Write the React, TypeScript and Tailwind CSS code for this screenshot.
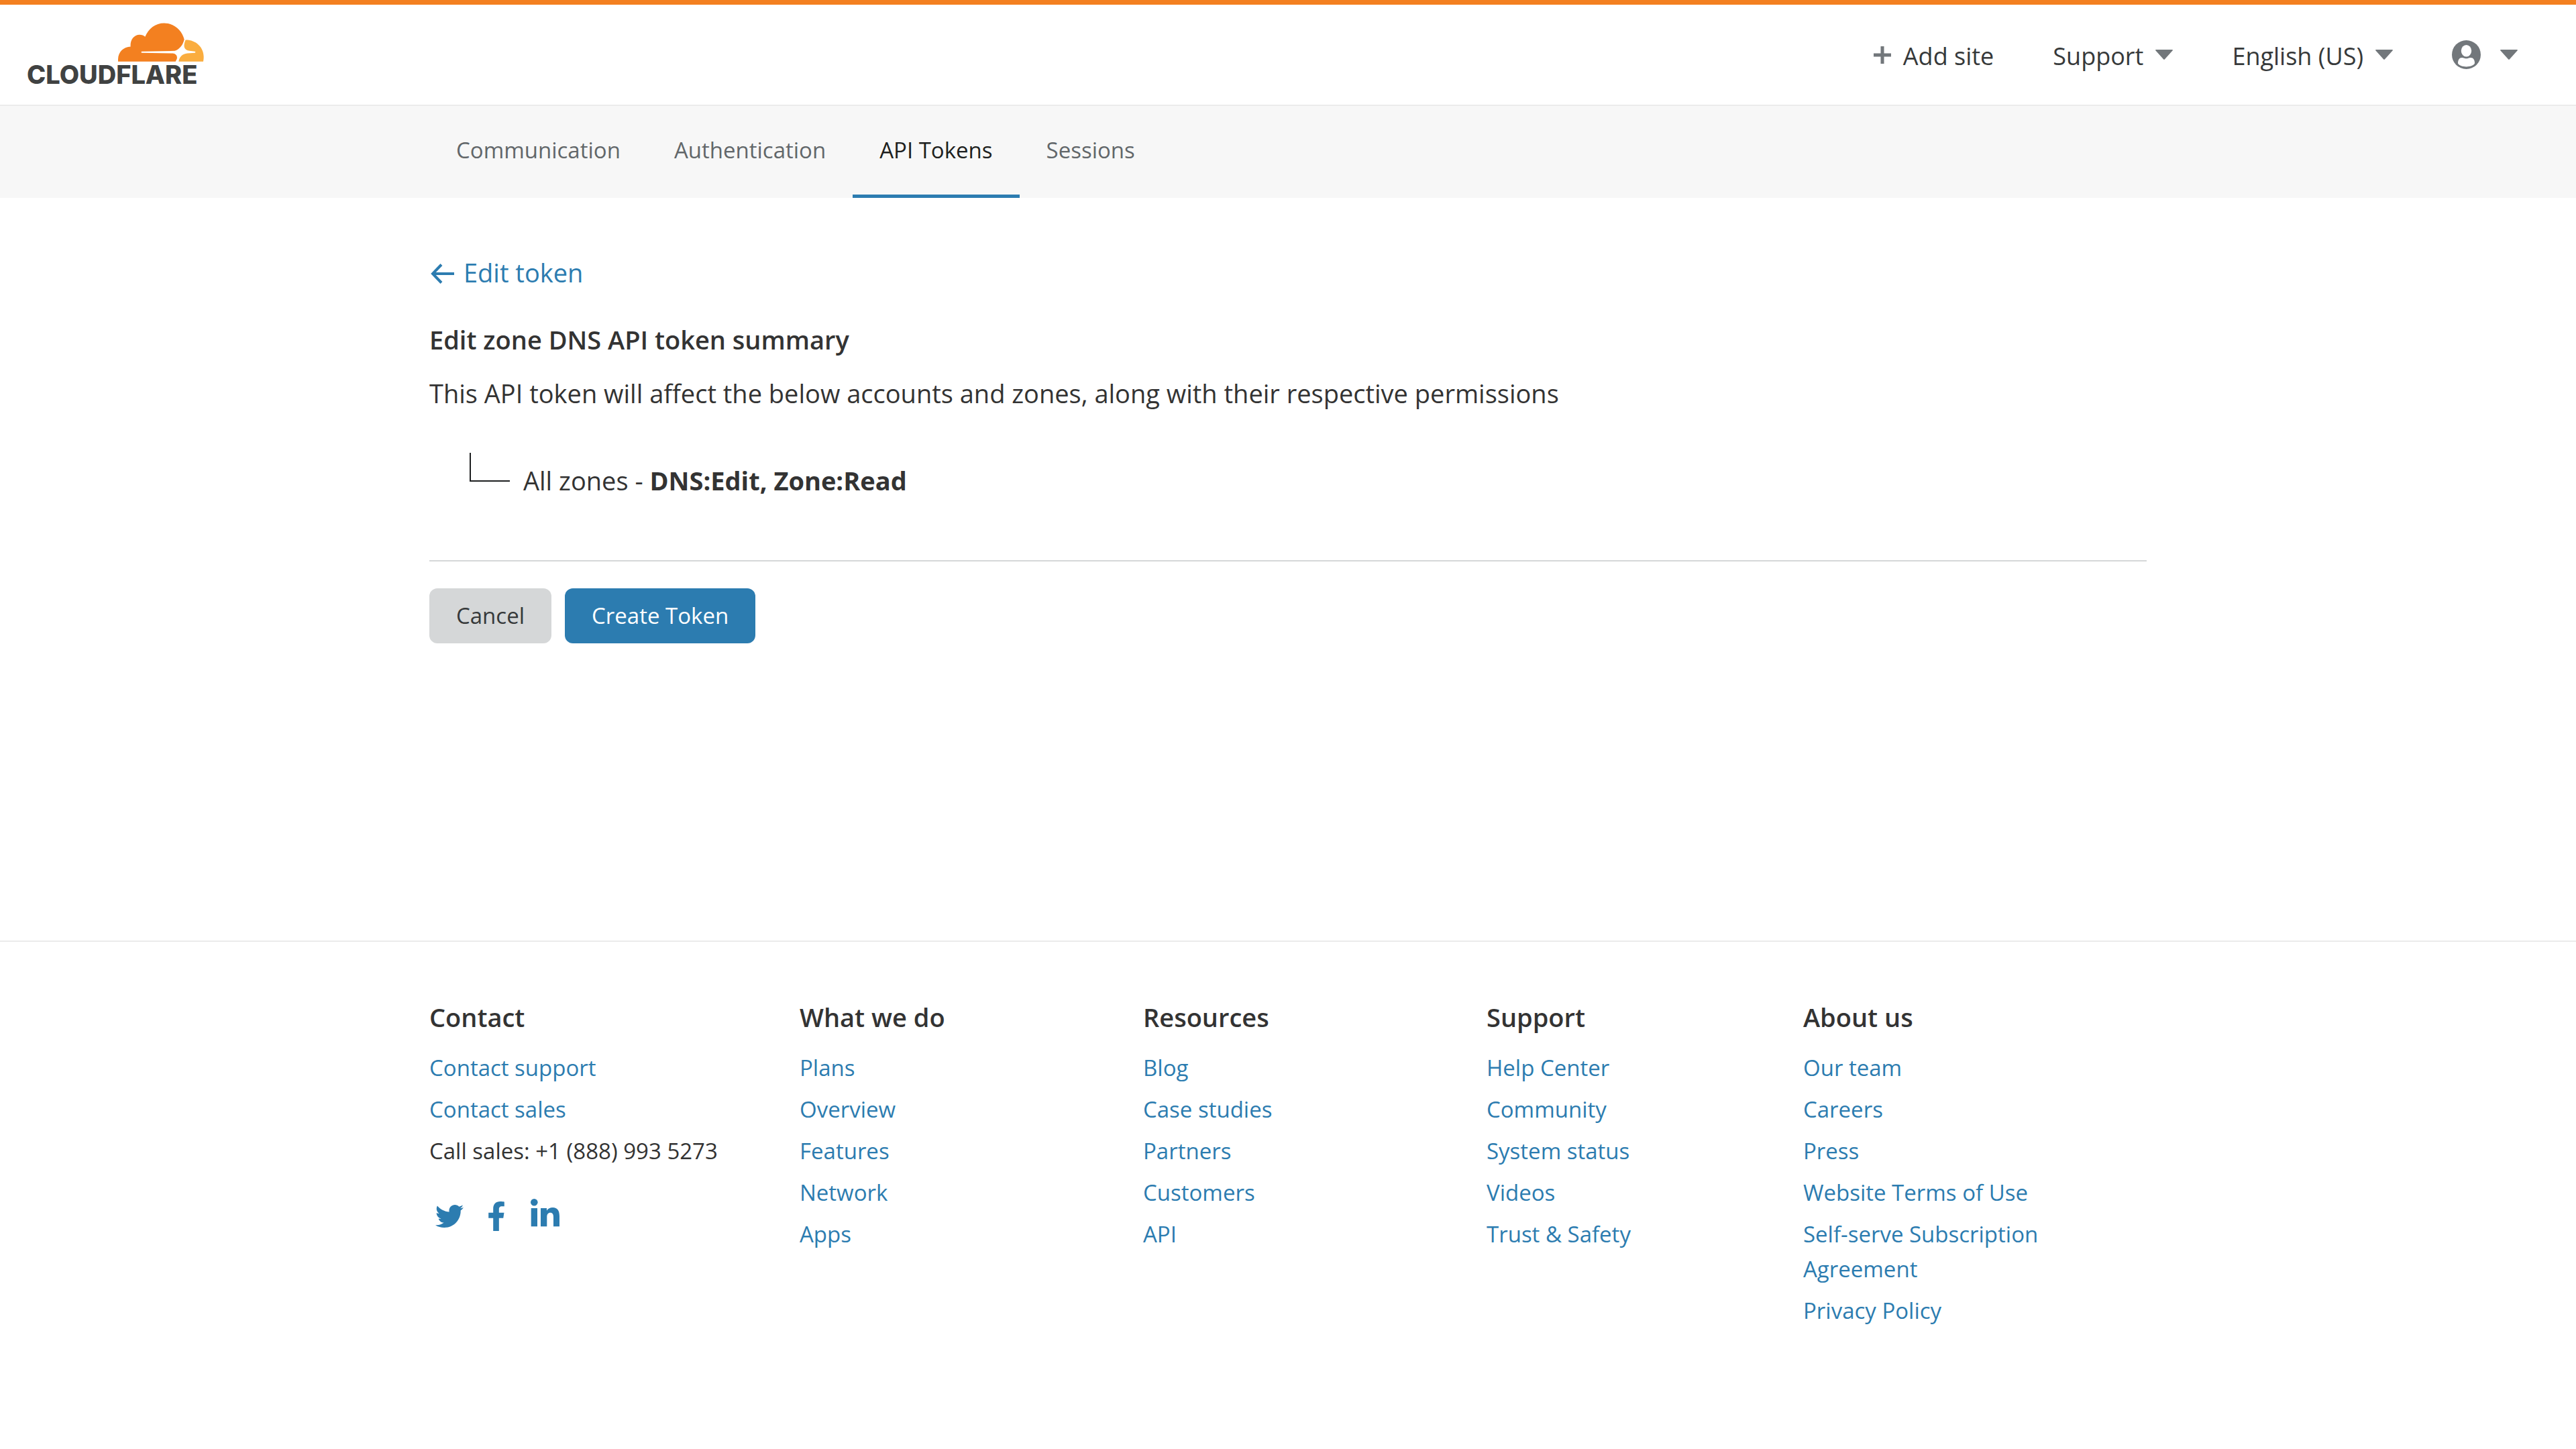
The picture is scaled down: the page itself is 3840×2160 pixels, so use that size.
import React from "react";
import { FaFacebookF, FaTwitter } from "react-icons/fa";

type FooterColumn = { title: string; links: string[] };

const tabs = ["Communication", "Authentication", "API Tokens", "Sessions"];
const activeTab = "API Tokens";

const columns: FooterColumn[] = [
  { title: "What we do", links: ["Plans", "Overview", "Features", "Network", "Apps"] },
  { title: "Resources", links: ["Blog", "Case studies", "Partners", "Customers", "API"] },
  { title: "Support", links: ["Help Center", "Community", "System status", "Videos", "Trust & Safety"] },
  {
    title: "About us",
    links: [
      "Our team",
      "Careers",
      "Press",
      "Website Terms of Use",
      "Self-serve Subscription Agreement",
      "Privacy Policy",
    ],
  },
];

function Logo() {
  return (
    <a href="#home" aria-label="Cloudflare" className="flex w-[264px] flex-col items-end">
      <svg viewBox="46 43 384 173" className="h-[58px] w-[128px]" aria-hidden="true">
        <path
          fill="#f38020"
          d="M46 216V205C47 172 71 150 102 149C99 120 117 96 142 96C152 96 161 99 167 105C182 68 213 44 252 44C295 44 331 74 342 117C337 140 322 161 300 168L152 171Q147 174 152 177L290 179C305 180 314 192 308 206L303 216Z"
        />
        <path
          fill="#faad3f"
          d="M348 119C392 118 429 150 429 195Q429 206 427 216H317C320 195 334 181 356 179L390 177Q395 174 390 171L366 168C342 165 335 149 348 119Z"
        />
      </svg>
      <span className="w-full font-['Inter',sans-serif] text-[38px] leading-[38px] font-extrabold text-[#404242]">
        CLOUDFLARE
      </span>
    </a>
  );
}

function Caret() {
  return (
    <svg viewBox="0 0 26 15" className="h-[15px] w-[26px]" fill="#72777b" aria-hidden="true">
      <path d="M1 0H25Q26.500 0 25.500 1.500L14 14.300Q13 15.300 12 14.300L.5 1.500Q-.5 0 1 0Z" />
    </svg>
  );
}

function Plus() {
  return (
    <svg viewBox="0 0 26 26" className="size-[26px]" fill="#72777b" aria-hidden="true">
      <path d="M10.500 0h5v10.500H26v5H15.500V26h-5V15.500H0v-5h10.500Z" />
    </svg>
  );
}

function Avatar() {
  return (
    <svg viewBox="0 0 43 43" className="size-[43px]" aria-hidden="true">
      <circle cx="21.500" cy="21.500" r="21.500" fill="#72777b" />
      <ellipse cx="21.500" cy="15.700" rx="7.700" ry="8.800" fill="#fff" />
      <path
        fill="#fff"
        d="M9 34.500C9 29 11 26 15 26C17.500 26 18 27.200 21.500 27.200S25.500 26 28 26C32 26 34 29 34 34.500C30 41 13 41 9 34.500Z"
      />
    </svg>
  );
}

function LinkedIn() {
  return (
    <svg viewBox="0 0 52 52" className="size-[52px]" fill="currentColor" aria-hidden="true">
      <circle cx="12.300" cy="5.300" r="5.300" />
      <path d="M7.700 14H17V41.300H7.700ZM22 14H31V17.700C33 14.500 36 13 40 13C47 13 50 18 50 26V41.300H41V27.500C41 23 39.700 20.700 36.300 20.700C33 20.700 31.300 23 31.300 27V41.300H22Z" />
    </svg>
  );
}

function Header() {
  return (
    <header className="flex items-center justify-between border-t-[7px] border-b-2 border-t-[#f38020] border-b-[#ebebeb] pr-[87px] pl-10">
      <div className="pt-[27px] pb-[26px]">
        <Logo />
      </div>
      <nav aria-label="Account" className="flex items-center gap-[88px] text-[36px] leading-[52px] text-[#36393a]">
        <a href="#add-site" className="flex items-center gap-[18px]">
          <Plus />
          <span className="pt-1">Add site</span>
        </a>
        <button type="button" className="flex items-center gap-[18px]">
          <span className="pt-1">Support</span>
          <Caret />
        </button>
        <button type="button" className="flex items-center gap-[18px]">
          <span className="pt-1">English (US)</span>
          <Caret />
        </button>
        <button type="button" aria-label="Profile" className="flex items-center gap-[29px]">
          <Avatar />
          <Caret />
        </button>
      </nav>
    </header>
  );
}

function Tabs() {
  return (
    <nav aria-label="Profile sections" className="bg-[#f7f7f7]">
      <div className="mx-auto flex w-2/3 text-[33px] leading-[52px]">
        {tabs.map((tab) => (
          <a
            key={tab}
            href={"#" + tab.toLowerCase().replace(" ", "-")}
            aria-current={tab === activeTab ? "page" : undefined}
            className={
              tab === activeTab
                ? "border-b-[5px] border-[#2c7cb0] px-10 py-10 text-[#1d1f20]"
                : "border-b-[5px] border-transparent px-10 py-10 text-[#62676a]"
            }
          >
            {tab}
          </a>
        ))}
      </div>
    </nav>
  );
}

function TokenSummary() {
  return (
    <main className="mx-auto w-2/3 pt-[81px] pb-[443px] text-[38px] leading-[60px]">
      <a href="#edit-token" className="flex w-fit items-center gap-[11px] text-[#2c7cb0]">
        <svg viewBox="0 0 40 40" className="h-11 w-10 pt-1" fill="none" stroke="currentColor" strokeWidth="4" aria-hidden="true">
          <path d="M18 6.500L5 20L18 33.500M5 20H37" />
        </svg>
        Edit token
      </a>
      <h1 className="mt-10 font-semibold">Edit zone DNS API token summary</h1>
      <p className="mt-5">
        This API token will affect the below accounts and zones, along with their respective permissions
      </p>
      <ul className="mt-[59px] ml-[60px]">
        <li className="flex items-start gap-5">
          <span className="h-[43px] w-[60px] border-b-2 border-l-2 border-[#1d1f20]" />
          <span className="pt-[11px]">
            All zones - <strong className="font-bold">DNS:Edit, Zone:Read</strong>
          </span>
        </li>
      </ul>
      <div className="mt-[89px] flex gap-5 border-t-2 border-[#d5d7d8] pt-10 text-[33px] leading-[50px]">
        <button type="button" className="rounded-xl bg-[#d5d7d8] px-10 py-4 text-[#36393a]">
          Cancel
        </button>
        <button type="button" className="rounded-xl bg-[#2c7cb0] px-10 py-4 text-white">
          Create Token
        </button>
      </div>
    </main>
  );
}

function Footer() {
  return (
    <footer className="border-t-2 border-[#ebebeb]">
      <div className="mx-auto grid w-2/3 grid-cols-[552fr_512fr_512fr_472fr_512fr] pt-[82px] pb-20 text-[33px] leading-[52px]">
        <section>
          <h2 className="text-[38px] leading-[60px] font-semibold">Contact</h2>
          <ul className="mt-5 flex flex-col gap-2.5">
            <li>
              <a href="#contact-support" className="text-[#2c7cb0]">Contact support</a>
            </li>
            <li>
              <a href="#contact-sales" className="text-[#2c7cb0]">Contact sales</a>
            </li>
            <li>Call sales: +1 (888) 993 5273</li>
          </ul>
          <div className="mt-[45px] ml-1 flex gap-[18px] text-[#2c7cb0]">
            <a href="#twitter" aria-label="Twitter" className="flex size-[52px] items-center justify-center">
              <FaTwitter className="size-[42px]" />
            </a>
            <a href="#facebook" aria-label="Facebook" className="flex size-[52px] items-center justify-center">
              <FaFacebookF className="size-11" />
            </a>
            <a href="#linkedin" aria-label="LinkedIn" className="flex size-[52px]">
              <LinkedIn />
            </a>
          </div>
        </section>
        {columns.map((column) => (
          <section key={column.title}>
            <h2 className="text-[38px] leading-[60px] font-semibold">{column.title}</h2>
            <ul className="mt-5 flex flex-col gap-2.5">
              {column.links.map((link) => (
                <li key={link}>
                  <a href={"#" + link.toLowerCase().replaceAll(" ", "-")} className="text-[#2c7cb0]">
                    {link}
                  </a>
                </li>
              ))}
            </ul>
          </section>
        ))}
      </div>
    </footer>
  );
}

export default function App() {
  return (
    <div className="min-h-screen bg-white font-['Open_Sans',sans-serif] text-[#333333]">
      <Header />
      <Tabs />
      <TokenSummary />
      <Footer />
    </div>
  );
}
